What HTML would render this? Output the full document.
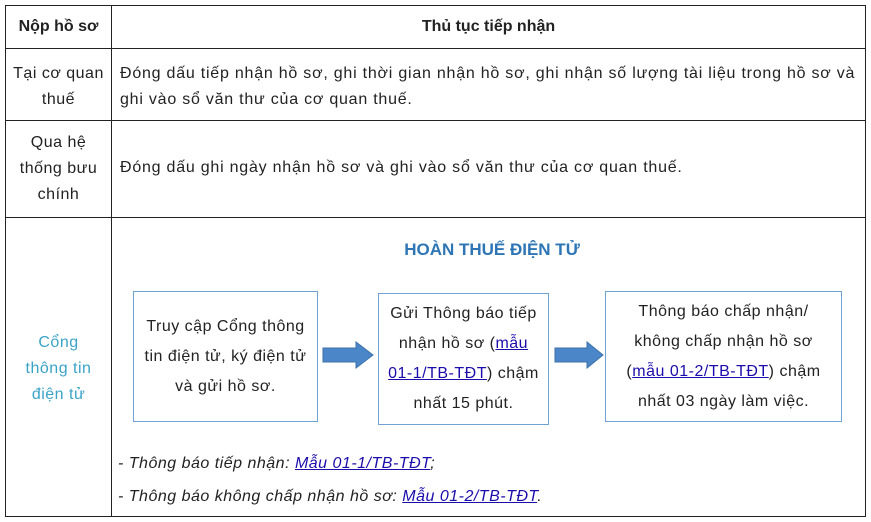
<!DOCTYPE html><html><head><meta charset="utf-8"><style>
body{margin:0;width:871px;height:522px;background:#fff;font-family:"Liberation Sans",sans-serif;font-size:16px;color:#222;position:relative;overflow:hidden;letter-spacing:0.5px}
.a{position:absolute;white-space:nowrap}
.l{position:absolute;background:#222}
.c{text-align:center}
.bx{position:absolute;border:1px solid #6fa3d3;box-sizing:border-box;display:flex;align-items:center;justify-content:center;text-align:center;line-height:30px}
.bx div{white-space:nowrap}
a{color:#1a0dab;text-decoration:underline}
</style></head><body>
<div class="l" style="left:5px;top:5px;width:861px;height:1px"></div>
<div class="l" style="left:5px;top:48px;width:861px;height:1px"></div>
<div class="l" style="left:5px;top:120px;width:861px;height:1px"></div>
<div class="l" style="left:5px;top:217px;width:861px;height:1px"></div>
<div class="l" style="left:5px;top:516px;width:861px;height:1px"></div>
<div class="l" style="left:5px;top:5px;width:1px;height:512px"></div>
<div class="l" style="left:111px;top:5px;width:1px;height:512px"></div>
<div class="l" style="left:865px;top:5px;width:1px;height:512px"></div>

<div class="a c" style="left:6px;width:105px;top:18px;font-weight:bold;letter-spacing:0">Nộp hồ sơ</div>
<div class="a c" style="left:112px;width:753px;top:18px;font-weight:bold;letter-spacing:0">Thủ tục tiếp nhận</div>

<div class="a c" style="left:6px;width:105px;top:61px;line-height:26px">Tại cơ quan<br>thuế</div>
<div class="a" style="left:120px;top:61px;line-height:26px;letter-spacing:0.77px">Đóng dấu tiếp nhận hồ sơ, ghi thời gian nhận hồ sơ, ghi nhận số lượng tài liệu trong hồ sơ và<br>ghi vào sổ văn thư của cơ quan thuế.</div>

<div class="a c" style="left:6px;width:105px;top:130px;line-height:26px">Qua hệ<br>thống bưu<br>chính</div>
<div class="a" style="left:120px;top:159px;letter-spacing:0.77px">Đóng dấu ghi ngày nhận hồ sơ và ghi vào sổ văn thư của cơ quan thuế.</div>

<div class="a c" style="left:6px;width:105px;top:330px;line-height:26px;color:#3aa3c8">Cổng<br>thông tin<br>điện tử</div>

<div class="a c" style="left:112px;width:760px;top:240px;font-weight:bold;color:#2e75b6;font-size:17px;letter-spacing:0">HOÀN THUẾ ĐIỆN TỬ</div>

<div class="bx" style="left:133px;top:291px;width:185px;height:131px"><div>Truy cập Cổng thông<br>tin điện tử, ký điện tử<br>và gửi hồ sơ.</div></div>
<div class="bx" style="left:378px;top:293px;width:171px;height:132px"><div>Gửi Thông báo tiếp<br>nhận hồ sơ (<a>mẫu</a><br><a>01-1/TB-TĐT</a>) chậm<br>nhất 15 phút.</div></div>
<div class="bx" style="left:605px;top:291px;width:237px;height:131px"><div>Thông báo chấp nhận/<br>không chấp nhận hồ sơ<br>(<a>mẫu 01-2/TB-TĐT</a>) chậm<br>nhất 03 ngày làm việc.</div></div>

<svg class="a" style="left:322px;top:341px" width="52" height="28"><polygon points="1,7 34,7 34,1 51,14 34,27 34,21 1,21" fill="#4a86c8" stroke="#3d72aa"/></svg>
<svg class="a" style="left:554px;top:341px" width="52" height="28"><polygon points="1,7 33,7 33,1 49,14 33,27 33,21 1,21" fill="#4a86c8" stroke="#3d72aa"/></svg>

<div class="a" style="left:118px;top:455px;font-style:italic">- Thông báo tiếp nhận: <a>Mẫu 01-1/TB-TĐT</a>;</div>
<div class="a" style="left:118px;top:488px;font-style:italic">- Thông báo không chấp nhận hồ sơ: <a>Mẫu 01-2/TB-TĐT</a>.</div>
</body></html>
